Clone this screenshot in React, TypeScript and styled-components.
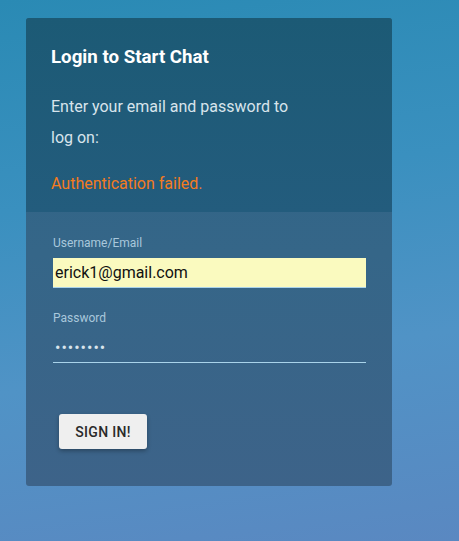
import React from 'react';
import styled, { createGlobalStyle } from 'styled-components';

const GlobalStyle = createGlobalStyle`
  html, body {
    margin: 0;
    padding: 0;
    height: 100%;
  }
  body {
    font-family: Roboto, 'Noto Sans', sans-serif;
  }
`;

const Page = styled.div`
  width: 459px;
  height: 541px;
  box-sizing: border-box;
  padding: 18px 0 0 26px;
  background: linear-gradient(172deg, #2a8ab4 0%, #3a90bf 35%, #5093c6 65%, #5a88c1 100%);
  overflow: hidden;
`;

const Card = styled.div`
  width: 366px;
  height: 468px;
  border-radius: 3px;
  overflow: hidden;
  display: flex;
  flex-direction: column;
  background: linear-gradient(180deg, #2b6386 0%, #356688 50%, #3d6389 100%);
`;

const Header = styled.div`
  height: 194px;
  box-sizing: border-box;
  padding: 26px 25px 0;
  background: linear-gradient(180deg, #1c5a75 0%, #235c7d 100%);
`;

const Title = styled.h2`
  margin: 0 0 21px;
  font-size: 18.72px;
  font-weight: 700;
  color: #ffffff;
  line-height: 26px;
`;

const Intro = styled.p`
  margin: 0;
  font-size: 16px;
  line-height: 31px;
  color: #d8e4ec;
  width: 250px;
`;

const Error = styled.p`
  margin: 19px 0 0;
  font-size: 16px;
  line-height: 24px;
  color: #f47b20;
`;

const Form = styled.form`
  padding: 24px 26px 0 27px;
  display: flex;
  flex-direction: column;
`;

const Field = styled.div`
  display: flex;
  flex-direction: column;
  margin-bottom: 23px;
`;

const Label = styled.label`
  font-size: 12px;
  line-height: 14px;
  color: #a9c8dc;
  margin-bottom: 8px;
`;

const Input = styled.input<{ $filled?: boolean }>`
  height: 30px;
  box-sizing: border-box;
  border: none;
  border-bottom: 1px solid #a9d3ea;
  outline: none;
  padding: 0 2px;
  font-family: Roboto, sans-serif;
  font-size: 16px;
  color: ${(p) => (p.$filled ? '#111' : '#d8e4ec')};
  background: ${(p) => (p.$filled ? '#fafabf' : 'transparent')};
  letter-spacing: ${(p) => (p.$filled ? '0' : '1px')};
`;

const Button = styled.button`
  align-self: flex-start;
  margin: 28px 0 0 6px;
  width: 88px;
  height: 35px;
  border: none;
  border-radius: 3px;
  background: #efefef;
  color: #2a2a2a;
  font-family: Roboto, sans-serif;
  font-size: 14px;
  font-weight: 500;
  letter-spacing: 0.3px;
  box-shadow: 0 2px 4px rgba(0, 0, 0, 0.3);
`;

const App: React.FC = () => {
  return (
    <Page>
      <GlobalStyle />
      <Card>
        <Header>
          <Title>Login to Start Chat</Title>
          <Intro>Enter your email and password to log on:</Intro>
          <Error>Authentication failed.</Error>
        </Header>
        <Form onSubmit={(e) => e.preventDefault()}>
          <Field>
            <Label>Username/Email</Label>
            <Input $filled defaultValue="erick1@gmail.com" />
          </Field>
          <Field>
            <Label>Password</Label>
            <Input type="password" defaultValue="password" />
          </Field>
          <Button type="submit">SIGN IN!</Button>
        </Form>
      </Card>
    </Page>
  );
};

export default App;
